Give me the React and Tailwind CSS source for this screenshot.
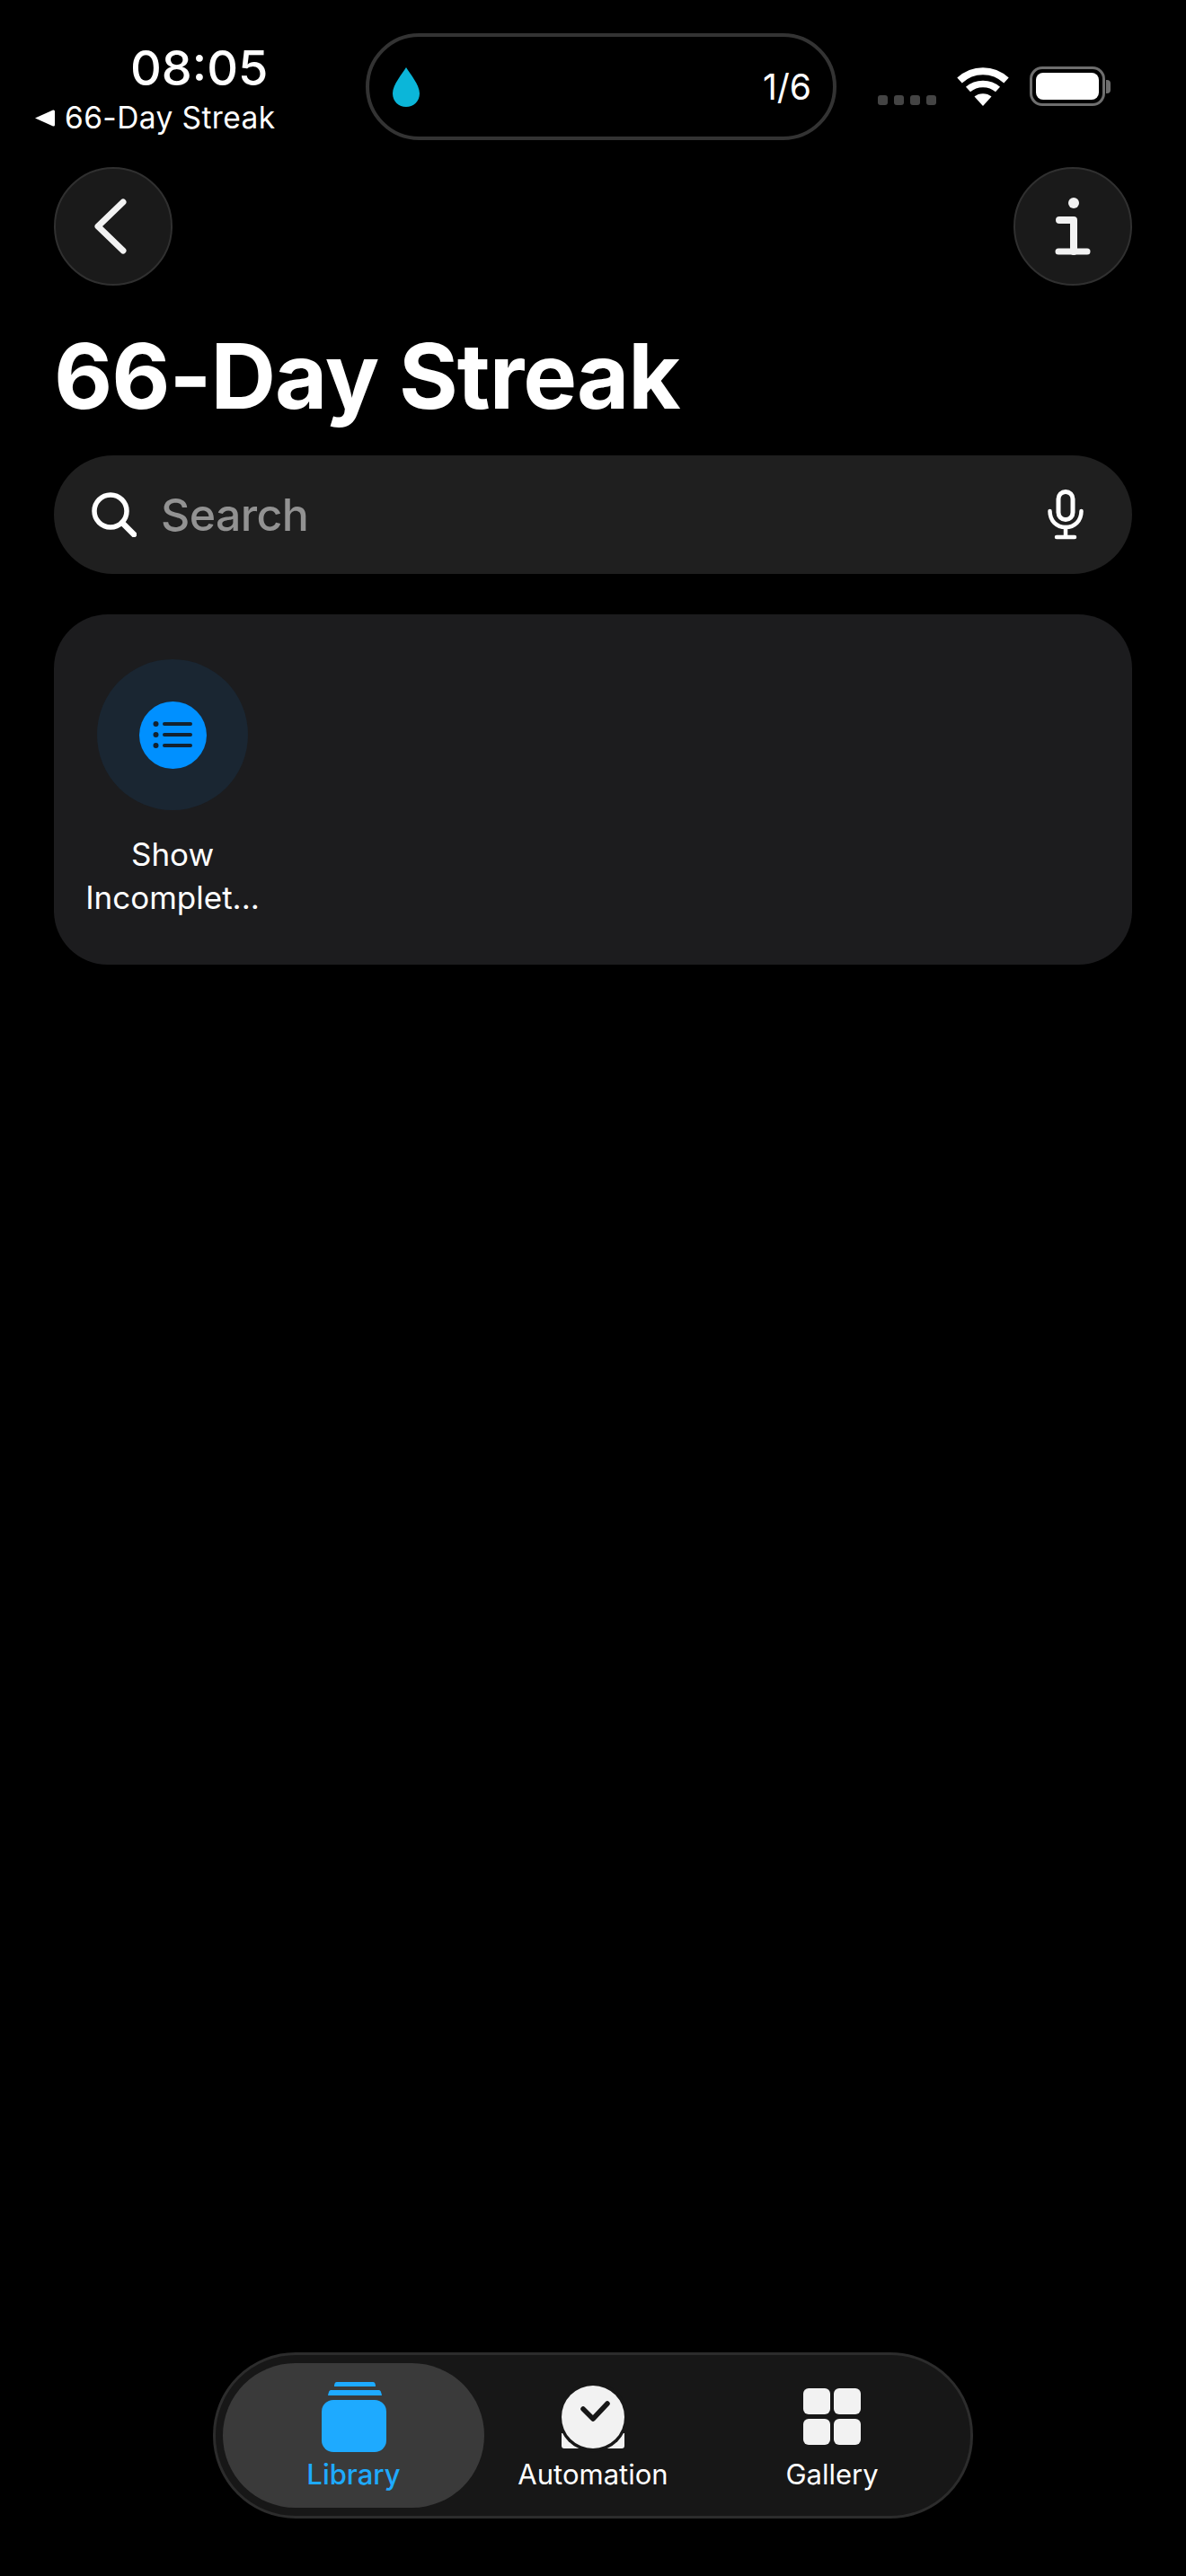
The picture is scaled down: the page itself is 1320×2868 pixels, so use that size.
const sans = "font-['Inter','Liberation_Sans',sans-serif]";

function Wifi() {
  return (
    <svg width="58" height="43" viewBox="0 0 58 43" fill="none">
      <path d="M29 43L19.5 32.5C22 30.4 25.3 29.2 29 29.2C32.7 29.2 36 30.4 38.5 32.5Z" fill="white" />
      <path d="M12.5 24.5C16.7 20.7 22.6 18.4 29 18.4C35.4 18.4 41.3 20.7 45.5 24.5" stroke="white" strokeWidth="7.5" />
      <path d="M3 14.5C9.8 8.2 19 4.2 29 4.2C39 4.2 48.2 8.2 55 14.5" stroke="white" strokeWidth="8" />
    </svg>
  );
}

function Battery() {
  return (
    <div className="flex items-center">
      <div className="w-[84px] h-[44px] rounded-[14px] border-[3px] border-[#6e6e6e] p-[4px]">
        <div className="w-full h-full rounded-[8px] bg-white" />
      </div>
      <div className="w-[5px] h-[15px] ml-[1px] rounded-r-[4px] bg-[#6e6e6e]" />
    </div>
  );
}

function StatusBar() {
  return (
    <div className="flex items-start h-[186px] shrink-0">
      <div className="w-[407px] shrink-0 pl-[38px] pt-[45px]">
        <div className="pl-[107px] text-[54px] leading-[62px] font-medium text-white whitespace-nowrap">08:05</div>
        <div className="flex items-center gap-[11px] mt-[5px] h-[38px]">
          <svg width="23" height="21" viewBox="0 0 23 21"><path d="M1 10.5L21 1.5Q23 1 23 3V18Q23 20 21 19.5Z" fill="white" /></svg>
          <span className="text-[33.5px] leading-[38px] text-white whitespace-nowrap tracking-[0.4px]">66-Day Streak</span>
        </div>
      </div>
      <div className="mt-[37px] w-[524px] h-[119px] shrink-0 rounded-[60px] border-[4px] border-[#333333] flex items-center justify-between pl-[26px] pr-[24px]">
        <svg width="30" height="44" viewBox="0 0 30 44"><path d="M15 0C19 7 30 19 30 29C30 38 23 44 15 44C7 44 0 38 0 29C0 19 11 7 15 0Z" fill="#0BB6D9" /></svg>
        <span className="text-[39px] leading-none text-white">1/6</span>
      </div>
      <div className="flex items-end mt-[75px] ml-[46px] h-[43px]">
        <div className="flex gap-[7px] mb-[1px]">
          <div className="w-[11px] h-[11px] rounded-[3px] bg-[#444444]" />
          <div className="w-[11px] h-[11px] rounded-[3px] bg-[#444444]" />
          <div className="w-[11px] h-[11px] rounded-[3px] bg-[#444444]" />
          <div className="w-[11px] h-[11px] rounded-[3px] bg-[#444444]" />
        </div>
        <div className="ml-[23px] mr-[23px]"><Wifi /></div>
        <Battery />
      </div>
    </div>
  );
}

function RoundButton({ children }) {
  return (
    <div className="w-[132px] h-[132px] rounded-full bg-[#1a1a1a] border-2 border-[#303030] flex items-center justify-center">
      {children}
    </div>
  );
}

function TabLabel({ active, children }) {
  return (
    <div className={active ? "mt-[6px] text-[31px] leading-[38px] font-medium text-[#1EAAFF]" : "mt-[6px] text-[31px] leading-[38px] text-white"}>
      {children}
    </div>
  );
}

export default function App() {
  return (
    <div className={`w-[1320px] h-[2868px] bg-black flex flex-col overflow-hidden ${sans}`}>
      <StatusBar />

      <div className="flex justify-between px-[60px] shrink-0">
        <RoundButton>
          <svg width="40" height="64" viewBox="0 0 40 64" fill="none" className="-ml-[6px]">
            <path d="M34 5L6 32L34 59" stroke="#F2F2F2" strokeWidth="7" strokeLinecap="round" strokeLinejoin="round" />
          </svg>
        </RoundButton>
        <RoundButton>
          <svg width="40" height="64" viewBox="0 0 40 64" fill="none">
            <circle cx="21" cy="6" r="6" fill="#F2F2F2" />
            <path d="M5 25H21V60" stroke="#F2F2F2" strokeWidth="8" strokeLinecap="round" strokeLinejoin="round" />
            <path d="M4 60H36" stroke="#F2F2F2" strokeWidth="7" strokeLinecap="round" />
          </svg>
        </RoundButton>
      </div>

      <h1 className="px-[60px] mt-[45px] text-[100.5px] leading-[112px] font-bold text-white whitespace-nowrap tracking-[-1px]">66-Day Streak</h1>

      <div className="mx-[60px] mt-[32px] h-[132px] rounded-full bg-[#1f1f1f] flex items-center pl-[42px] pr-[54px] shrink-0">
        <svg width="50" height="50" viewBox="0 0 50 50" fill="none" className="shrink-0">
          <circle cx="21" cy="21" r="18" stroke="white" strokeWidth="5.5" />
          <path d="M34 34L47 47" stroke="white" strokeWidth="6.5" strokeLinecap="round" />
        </svg>
        <span className="ml-[27px] text-[50px] leading-none font-medium text-[#929292] tracking-[-0.6px]">Search</span>
        <svg width="40" height="56" viewBox="0 0 40 56" fill="none" className="ml-auto">
          <rect x="12" y="2.5" width="16" height="31" rx="8" stroke="white" strokeWidth="5" />
          <path d="M2.5 24C2.5 35 10 42 20 42C30 42 37.5 35 37.5 24" stroke="white" strokeWidth="4.5" strokeLinecap="round" />
          <path d="M20 42V53M10 53H30" stroke="white" strokeWidth="4.5" strokeLinecap="round" />
        </svg>
      </div>

      <div className="mx-[60px] mt-[45px] h-[390px] rounded-[60px] bg-[#1c1c1e] shrink-0 pl-[37px] pt-[50px]">
        <div className="w-[190px] flex flex-col items-center">
          <div className="w-[168px] h-[168px] rounded-full bg-[#1a2632] flex items-center justify-center">
            <div className="w-[75px] h-[75px] rounded-full bg-[#0090FF] flex items-center justify-center">
              <svg width="44" height="32" viewBox="0 0 44 32">
                <circle cx="3.5" cy="4" r="3" fill="#14222E" />
                <circle cx="3.5" cy="16" r="3" fill="#14222E" />
                <circle cx="3.5" cy="28" r="3" fill="#14222E" />
                <rect x="11" y="2" width="33" height="4" rx="2" fill="#14222E" />
                <rect x="11" y="14" width="33" height="4" rx="2" fill="#14222E" />
                <rect x="11" y="26" width="33" height="4" rx="2" fill="#14222E" />
              </svg>
            </div>
          </div>
          <div className="mt-[25px] text-[35px] leading-[48px] text-white text-center whitespace-nowrap">
            <div>Show</div>
            <div>Incomplet...</div>
          </div>
        </div>
      </div>

      <div className="mt-auto mb-[64px] mx-[237px] h-[185px] shrink-0 rounded-[92px] bg-[#171717] border-[3px] border-[#2c2c2c] flex items-stretch pl-[8px] py-[9px]">
        <div className="w-[291px] rounded-[81px] bg-[#3a3a3a] flex flex-col items-center pt-[21px]">
          <svg width="72" height="78" viewBox="0 0 72 78">
            <path d="M17 0H57Q60 0 60 5H14Q14 0 17 0Z" fill="#1EAAFF" />
            <path d="M10 9H64Q66 9 67 15H7Q8 9 10 9Z" fill="#1EAAFF" />
            <rect x="0" y="20" width="72" height="58" rx="13" fill="#1EAAFF" />
          </svg>
          <TabLabel active>Library</TabLabel>
        </div>
        <div className="w-[242px] flex flex-col items-center pt-[21px]">
          <svg width="70" height="78" viewBox="0 0 70 78">
            <path d="M0 57H70V71Q70 74 67 74H3Q0 74 0 71Z" fill="#F2F2F2" />
            <circle cx="35" cy="39" r="38.5" fill="#171717" />
            <circle cx="35" cy="39" r="35" fill="#F2F2F2" />
            <path d="M24 30L35 41L51 24" fill="none" stroke="#171717" strokeWidth="5.5" strokeLinecap="round" strokeLinejoin="round" />
          </svg>
          <TabLabel>Automation</TabLabel>
        </div>
        <div className="w-[290px] flex flex-col items-center pt-[21px]">
          <svg width="64" height="78" viewBox="0 0 64 78">
            <rect x="0" y="7" width="30" height="29" rx="6" fill="#F2F2F2" />
            <rect x="34" y="7" width="30" height="29" rx="6" fill="#F2F2F2" />
            <rect x="0" y="41" width="30" height="29" rx="6" fill="#F2F2F2" />
            <rect x="34" y="41" width="30" height="29" rx="6" fill="#F2F2F2" />
          </svg>
          <TabLabel>Gallery</TabLabel>
        </div>
      </div>
    </div>
  );
}
